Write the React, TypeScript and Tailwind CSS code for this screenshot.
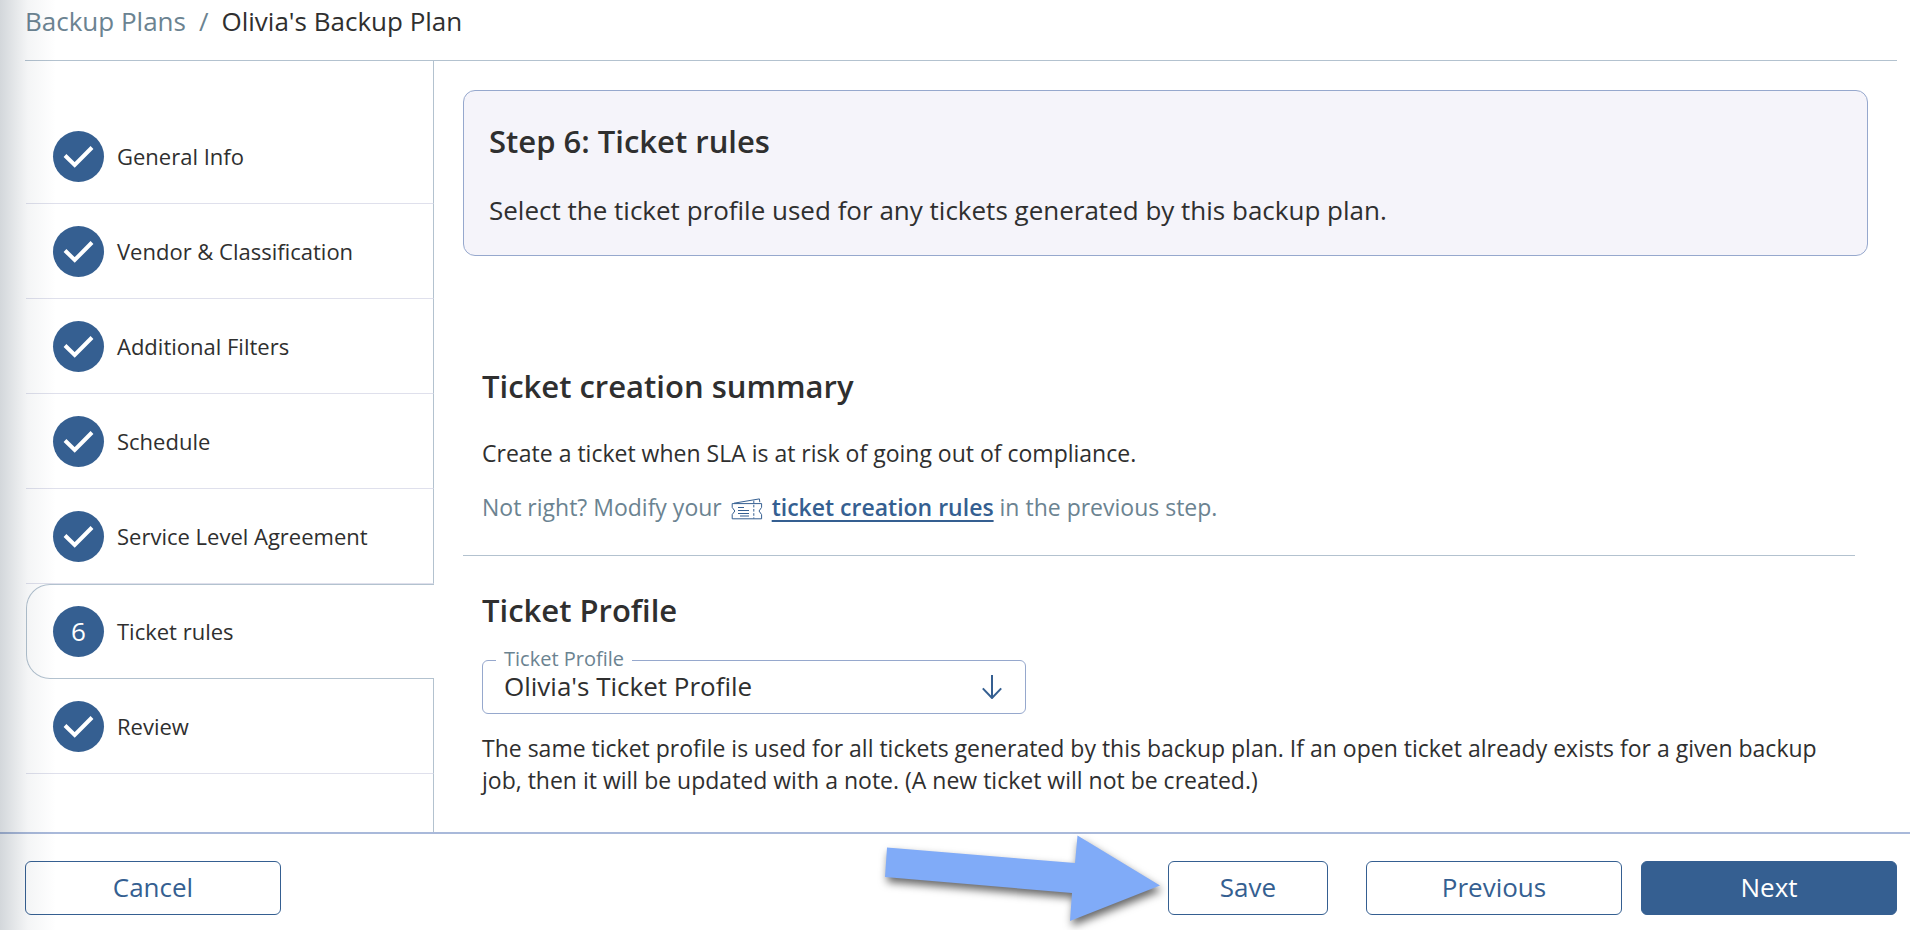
import { useState } from 'react';
import clsx from 'clsx';

const ACTIVE_STEP = 6;

const steps = [
  'General Info',
  'Vendor & Classification',
  'Additional Filters',
  'Schedule',
  'Service Level Agreement',
  'Ticket rules',
  'Review',
];

function CheckIcon() {
  return (
    <svg viewBox="0 0 51 51" className="size-full" fill="none" aria-hidden="true">
      <path d="M12 24.5 L21.7 34 L39 16.5" stroke="white" strokeWidth="4" />
    </svg>
  );
}

function TicketIcon() {
  return (
    <svg
      viewBox="0 0 32 22"
      className="inline-block h-[22px] w-8 align-[-4px]"
      fill="none"
      stroke="#355f91"
      strokeWidth="1"
      aria-hidden="true"
    >
      {/* back ticket */}
      <path d="M3 5.2 L28.4 0.9 L28.8 4.2" />
      {/* front ticket with notched sides */}
      <path d="M1.2 5.6 H30.6 V9.4 L28 13 L30.6 16.6 V20.8 H1.2 V16.6 L3.8 13 L1.2 9.4 Z" />
      <path d="M22.8 2.6 V20.5" strokeDasharray="2.6 1.6" />
      <path d="M7 9.5 H13 M7 12.5 H18 M7 15.5 H18 M9 18 H18" />
    </svg>
  );
}

function Sidebar() {
  return (
    <nav className="flex w-[408px] shrink-0 flex-col" aria-label="Backup plan steps">
      <div className="h-12 border-r border-[#b3c2cf]" />
      <ol>
        {steps.map((label, index) => {
          const number = index + 1;
          const active = number === ACTIVE_STEP;
          return (
            <li
              key={label}
              className={clsx(
                'h-[95px] border-[#b3c2cf]',
                active ? 'rounded-l-3xl border-y border-l' : 'border-r border-b border-b-[#dfe0ec]',
              )}
            >
              <button
                type="button"
                aria-current={active ? 'step' : undefined}
                className={clsx('flex size-full items-center gap-[13px] text-left text-[22px]', active ? 'pl-[26px]' : 'pl-[27px]')}
              >
                <span className="flex size-[51px] items-center justify-center rounded-full bg-[#355f91] text-[26px] text-white">
                  {active ? number : <CheckIcon />}
                </span>
                {label}
              </button>
            </li>
          );
        })}
      </ol>
      <div className="flex-1 border-r border-[#b3c2cf]" />
    </nav>
  );
}

function TicketProfileField() {
  const [profile, setProfile] = useState("Olivia's Ticket Profile");

  return (
    <div className="relative mt-7 w-[544px]">
      <label htmlFor="ticket-profile" className="absolute -top-[15px] left-[14px] bg-white px-2 text-[20px] leading-7 text-[#6b8391]">
        Ticket Profile
      </label>
      <select
        id="ticket-profile"
        value={profile}
        onChange={(e) => setProfile(e.target.value)}
        className="h-[54px] w-full appearance-none rounded-md border border-[#96a8cd] bg-white pr-14 pb-[2px] pl-[21px] text-[26px]"
      >
        <option>Olivia's Ticket Profile</option>
      </select>
      <svg
        viewBox="0 0 20 24"
        className="pointer-events-none absolute top-[15px] right-6 h-6 w-5"
        fill="none"
        stroke="#355f91"
        strokeWidth="2"
        aria-hidden="true"
      >
        <path d="M10 0 V23 M0.8 13.4 L10 23 L19.2 13.4" />
      </svg>
    </div>
  );
}

function PointerArrow() {
  return (
    <svg
      viewBox="0 0 275 86"
      className="pointer-events-none absolute -top-[26px] right-full mr-2 h-[86px] w-[275px] overflow-visible drop-shadow-[2px_5px_4px_rgba(0,0,0,0.6)]"
      aria-hidden="true"
    >
      <path d="M2 12.5 L190 28 L192.5 0.5 L275 50.5 L185 86 L187 58 L0 42 Z" fill="#80abf8" />
    </svg>
  );
}

const buttonBase = 'h-[54px] rounded-md border border-[#355f91] pb-[2px] text-[26px]';

export default function App() {
  return (
    <div className="relative flex min-h-screen flex-col bg-white font-['Open_Sans',sans-serif] text-[#2f2f2f]">
      <header className="mr-[13px] ml-[25px] h-[61px] border-b border-[#b3c2cf]">
        <nav aria-label="Breadcrumb" className="flex gap-[13px] pt-1 text-[26px] leading-[34px]">
          <a href="#plans" className="text-[#6b8391]">Backup Plans</a>
          <span className="text-[#6b8391]">/</span>
          <span>Olivia's Backup Plan</span>
        </nav>
      </header>

      <div className="flex flex-1 pl-[26px]">
        <Sidebar />
        <main className="min-w-0 flex-1 pt-[29px] pr-[42px] pl-[29px]">
          <section className="h-[166px] rounded-xl border border-[#96a8cd] bg-[#f5f4fa] px-[25px] pt-7">
            <h1 className="text-[31px] leading-[44px] font-semibold">Step 6: Ticket rules</h1>
            <p className="mt-[29px] text-[26px] leading-9">Select the ticket profile used for any tickets generated by this backup plan.</p>
          </section>

          <div className="mr-[13px]">
            <section className="mt-[108px] border-b border-[#b3c2cf] pb-8 pl-[19px]">
              <h2 className="text-[31px] leading-[44px] font-semibold">Ticket creation summary</h2>
              <p className="mt-[29px] text-[23px] leading-8">Create a ticket when SLA is at risk of going out of compliance.</p>
              <p className="mt-[22px] text-[23px] leading-8 text-[#6b8391]">
                Not right? Modify your <span className="mx-[3px]"><TicketIcon /></span>{' '}
                <a href="#rules" className="font-semibold text-[#355f91] underline decoration-2 underline-offset-4">ticket creation rules</a> in the previous step.
              </p>
            </section>

            <section className="pt-8 pl-[19px]">
              <h2 className="text-[31px] leading-[44px] font-semibold">Ticket Profile</h2>
              <TicketProfileField />
              <p className="mt-[18px] pb-6 text-[23px] leading-8">
                The same ticket profile is used for all tickets generated by this backup plan. If an open ticket already exists for a given backup job, then it
                will be updated with a note. (A new ticket will not be created.)
              </p>
            </section>
          </div>
        </main>
      </div>

      <footer className="flex h-[98px] items-start border-t-2 border-[#a9b9da] pt-[27px] pr-[13px] pl-[25px] text-[#355f91]">
        <button type="button" className={clsx(buttonBase, 'w-64')}>Cancel</button>
        <div className="relative ml-auto">
          <PointerArrow />
          <button type="button" className={clsx(buttonBase, 'w-40')}>Save</button>
        </div>
        <button type="button" className={clsx(buttonBase, 'ml-[38px] w-64')}>Previous</button>
        <button type="button" className={clsx(buttonBase, 'ml-[19px] w-64 bg-[#355f91] text-white')}>Next</button>
      </footer>

      <div className="pointer-events-none absolute inset-y-0 left-0 w-14 bg-linear-to-r from-[#23374a]/20 via-[#23374a]/5 to-transparent" />
    </div>
  );
}
